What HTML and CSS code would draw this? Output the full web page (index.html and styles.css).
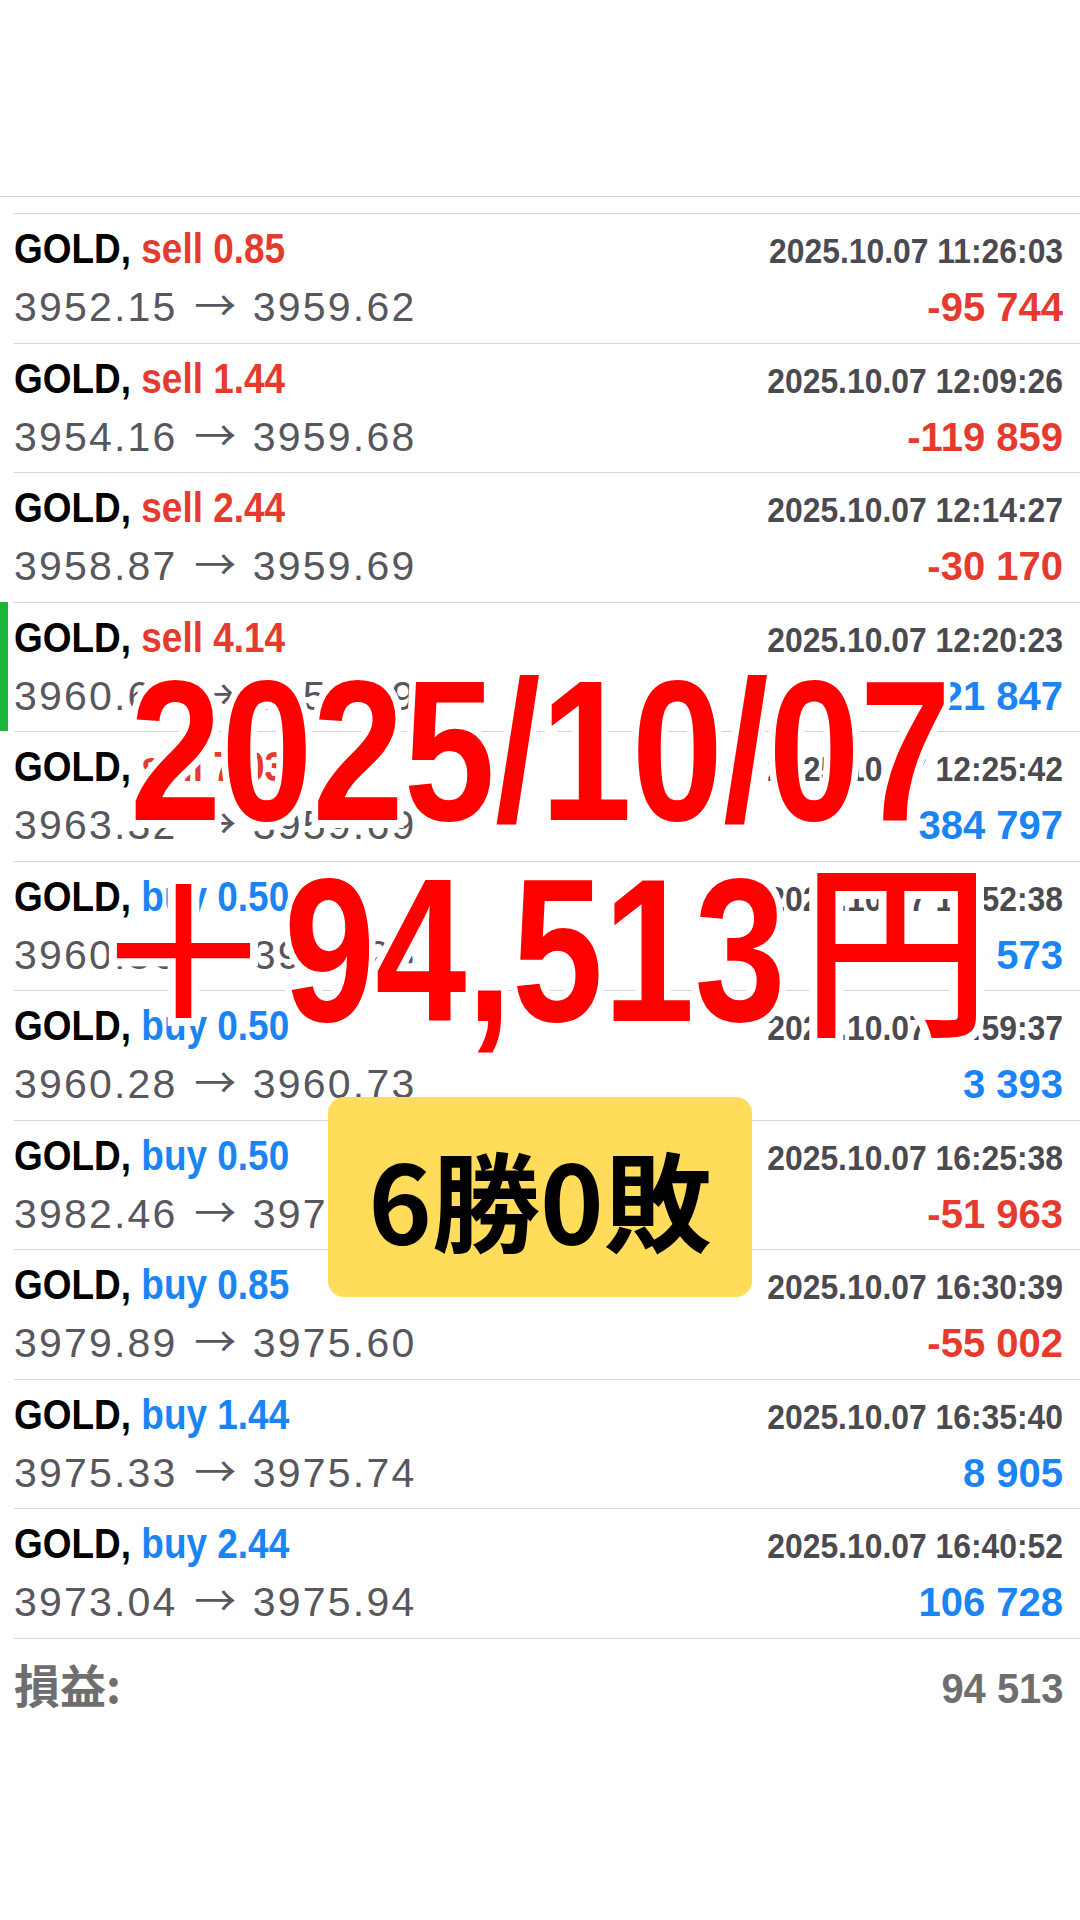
FILE: index.html
```html
<!DOCTYPE html>
<html lang="ja">
<head>
  <meta charset="UTF-8" />
  <meta name="viewport" content="width=device-width, initial-scale=1.0" />
  <title>取引履歴 2025/10/07</title>
  <link rel="stylesheet" href="styles.css">
</head>
<body>
  <div class="sheet">
    <div class="header"></div>

    <div class="list">
      <div class="trade">
        <div class="trade-body">
          <div class="trade-head"><span class="title"><span class="sym">GOLD,</span> <span class="sell">sell 0.85</span></span><span class="time">2025.10.07 11:26:03</span></div>
          <div class="trade-foot"><span class="price">3952.15 <span class="arrow">→</span> 3959.62</span><span class="profit loss">-95 744</span></div>
        </div>
      </div>
      <div class="trade">
        <div class="trade-body">
          <div class="trade-head"><span class="title"><span class="sym">GOLD,</span> <span class="sell">sell 1.44</span></span><span class="time">2025.10.07 12:09:26</span></div>
          <div class="trade-foot"><span class="price">3954.16 <span class="arrow">→</span> 3959.68</span><span class="profit loss">-119 859</span></div>
        </div>
      </div>
      <div class="trade">
        <div class="trade-body">
          <div class="trade-head"><span class="title"><span class="sym">GOLD,</span> <span class="sell">sell 2.44</span></span><span class="time">2025.10.07 12:14:27</span></div>
          <div class="trade-foot"><span class="price">3958.87 <span class="arrow">→</span> 3959.69</span><span class="profit loss">-30 170</span></div>
        </div>
      </div>
      <div class="trade active">
        <div class="trade-body">
          <div class="trade-head"><span class="title"><span class="sym">GOLD,</span> <span class="sell">sell 4.14</span></span><span class="time">2025.10.07 12:20:23</span></div>
          <div class="trade-foot"><span class="price">3960.64 <span class="arrow">→</span> 3958.69</span><span class="profit gain">121 847</span></div>
        </div>
      </div>
      <div class="trade">
        <div class="trade-body">
          <div class="trade-head"><span class="title"><span class="sym">GOLD,</span> <span class="sell">sell 7.03</span></span><span class="time">2025.10.07 12:25:42</span></div>
          <div class="trade-foot"><span class="price">3963.32 <span class="arrow">→</span> 3959.69</span><span class="profit gain">384 797</span></div>
        </div>
      </div>
      <div class="trade">
        <div class="trade-body">
          <div class="trade-head"><span class="title"><span class="sym">GOLD,</span> <span class="buy">buy 0.50</span></span><span class="time">2025.10.07 15:52:38</span></div>
          <div class="trade-foot"><span class="price">3960.86 <span class="arrow">→</span> 3962.26</span><span class="profit gain">10 573</span></div>
        </div>
      </div>
      <div class="trade">
        <div class="trade-body">
          <div class="trade-head"><span class="title"><span class="sym">GOLD,</span> <span class="buy">buy 0.50</span></span><span class="time">2025.10.07 15:59:37</span></div>
          <div class="trade-foot"><span class="price">3960.28 <span class="arrow">→</span> 3960.73</span><span class="profit gain">3 393</span></div>
        </div>
      </div>
      <div class="trade">
        <div class="trade-body">
          <div class="trade-head"><span class="title"><span class="sym">GOLD,</span> <span class="buy">buy 0.50</span></span><span class="time">2025.10.07 16:25:38</span></div>
          <div class="trade-foot"><span class="price">3982.46 <span class="arrow">→</span> 3975.57</span><span class="profit loss">-51 963</span></div>
        </div>
      </div>
      <div class="trade">
        <div class="trade-body">
          <div class="trade-head"><span class="title"><span class="sym">GOLD,</span> <span class="buy">buy 0.85</span></span><span class="time">2025.10.07 16:30:39</span></div>
          <div class="trade-foot"><span class="price">3979.89 <span class="arrow">→</span> 3975.60</span><span class="profit loss">-55 002</span></div>
        </div>
      </div>
      <div class="trade">
        <div class="trade-body">
          <div class="trade-head"><span class="title"><span class="sym">GOLD,</span> <span class="buy">buy 1.44</span></span><span class="time">2025.10.07 16:35:40</span></div>
          <div class="trade-foot"><span class="price">3975.33 <span class="arrow">→</span> 3975.74</span><span class="profit gain">8 905</span></div>
        </div>
      </div>
      <div class="trade">
        <div class="trade-body">
          <div class="trade-head"><span class="title"><span class="sym">GOLD,</span> <span class="buy">buy 2.44</span></span><span class="time">2025.10.07 16:40:52</span></div>
          <div class="trade-foot"><span class="price">3973.04 <span class="arrow">→</span> 3975.94</span><span class="profit gain">106 728</span></div>
        </div>
      </div>

      <div class="total">
        <span class="total-label">損益:</span>
        <span class="total-value">94 513</span>
      </div>
    </div>

    <!-- 上に重ねる見出し -->
    <div class="big-date"><span class="big-date-text halo">2025/10/07</span></div>
    <div class="big-amount halo">
      <span class="plus">＋</span><span class="amount-num">94,513</span><span class="yen">円</span>
    </div>
    <div class="badge">6勝0敗</div>
  </div>
</body>
</html>
```

FILE: styles.css
```css
body {
  margin: 0;
  background: #fff;
  font-family: "Liberation Sans", Arial, sans-serif;
}

.sheet {
  position: relative;
  width: 1080px;
  height: 1920px;
  overflow: hidden;
}

.header {
  height: 196px;
  border-bottom: 1px solid #d2d2d2;
}

.list {
  padding-top: 16px;
}

.trade {
  padding-left: 14px;
}

.trade.active {
  border-left: 8px solid #1cb43a;
  padding-left: 6px;
}

.trade-body {
  box-sizing: border-box;
  height: 129.5px;
  border-top: 1px solid #d6d6d6;
  padding: 15px 17px 0 0;
}

/* 元のスクショは横に詰まった書体なので scaleX で寄せる */
.trade-head {
  display: flex;
  align-items: baseline;
  justify-content: space-between;
  height: 40px;
  line-height: 40px;
  font-weight: bold;
  white-space: nowrap;
}

.title {
  font-size: 42px;
  transform: scaleX(0.88);
  transform-origin: left center;
}

.sym { color: #000; }
.sell { color: #e63a2e; }
.buy { color: #1a84f5; }

.time {
  font-size: 35px;
  color: #4a4a51;
  transform: scaleX(0.91);
  transform-origin: right center;
}

.trade-foot {
  display: flex;
  align-items: baseline;
  justify-content: space-between;
  margin-top: 9px;
  line-height: 50px;
  white-space: nowrap;
}

.price {
  font-size: 41px;
  letter-spacing: 2.2px;
  color: #57575d;
}

.arrow {
  font-family: "Noto Sans CJK JP", sans-serif;
  font-size: 42px;
  letter-spacing: 0;
  margin: 0 3px;
}

.profit {
  font-size: 40px;
  font-weight: bold;
}

.loss { color: #e63a2e; }
.gain { color: #1a84f5; }

.total {
  display: flex;
  align-items: baseline;
  justify-content: space-between;
  margin-left: 14px;
  padding: 16px 17px 0 0;
  border-top: 1px solid #d6d6d6;
  line-height: 56px;
  color: #6e6e6e;
  font-weight: bold;
}

.total-label {
  font-family: "Noto Sans CJK JP", sans-serif;
  font-size: 46px;
}

.total-value {
  font-size: 42px;
  transform: scaleX(0.95);
  transform-origin: right center;
}

/* 赤い見出し（白フチ付き） */
.halo {
  -webkit-text-stroke: 16px #fff;
  paint-order: stroke fill;
}

.big-date {
  position: absolute;
  left: 0;
  right: 0;
  top: 651px;
  text-align: center;
  font-weight: bold;
  font-size: 200px;
  line-height: 1;
  color: #ff0000;
  white-space: nowrap;
}

.big-date-text {
  display: inline-block;
  transform: scaleX(0.82);
}

.big-amount {
  position: absolute;
  left: 91px;
  top: 844px;
  display: flex;
  align-items: baseline;
  color: #ff0000;
  line-height: 1;
  white-space: nowrap;
}

.plus,
.yen {
  font-family: "Noto Sans CJK JP", sans-serif;
  font-weight: 500;
}

.plus {
  font-size: 185px;
}

.yen {
  font-size: 190px;
  margin-left: 12px;
}

.amount-num {
  display: inline-block;
  width: 505px;
  margin-left: 8px;
  font-weight: bold;
  font-size: 205px;
  transform: scaleX(0.8);
  transform-origin: left center;
}

.badge {
  position: absolute;
  left: 328px;
  top: 1097px;
  width: 424px;
  height: 200px;
  border-radius: 16px;
  background: #ffdc5a;
  display: flex;
  align-items: center;
  justify-content: center;
  font-family: "Noto Sans CJK JP", sans-serif;
  font-weight: bold;
  font-size: 108px;
  color: #000;
}
```
